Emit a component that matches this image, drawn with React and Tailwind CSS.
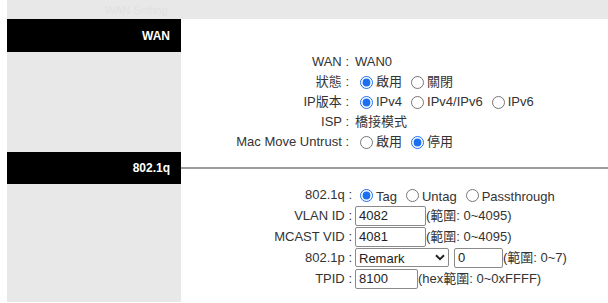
import React, { useState } from 'react';

const font = { fontFamily: '"Liberation Sans", Arial, "Noto Sans CJK TC", sans-serif' };

const Radio = ({ checked, onChange, label, name, low }) => (
  <label className="inline-flex items-center mr-[4px]">
    <input
      type="radio"
      name={name}
      checked={checked}
      onChange={onChange}
      className="w-[13px] h-[13px] ml-[5px] mr-[3px] accent-[#1b6ff0]"
    />
    <span className={low ? 'translate-y-[2px]' : ''}>{label}</span>
  </label>
);

const Row = ({ label, width, gap, children, h = 'h-[20px]' }) => (
  <div className={`flex items-center ${h}`}>
    <div className="text-right shrink-0" style={{ width }}>{label} :</div>
    <div className="flex items-center" style={{ paddingLeft: gap }}>{children}</div>
  </div>
);

const Input = ({ value, w }) => (
  <input
    defaultValue={value}
    className={`${w} h-[20px] border border-[#8a8a8a] rounded-[2px] px-[3px] text-[13px] text-[#222] bg-white`}
  />
);

export default function App() {
  const [status, setStatus] = useState('on');
  const [ipv, setIpv] = useState('4');
  const [mac, setMac] = useState('off');
  const [q, setQ] = useState('tag');

  return (
    <div className="w-[608px] h-[303px] bg-white overflow-hidden text-[13px] text-[#333]" style={font}>
      <div className="ml-[7px] h-[19px] bg-[#e8e8e8] pl-[98px] pt-[5px] text-[11px] text-[#e1e1e1] leading-none">
        WAN Setting
      </div>

      {/* WAN section */}
      <div className="flex ml-[7px]">
        <div className="w-[174px] flex flex-col bg-[#e8e8e8]">
          <div className="h-[33px] bg-black text-white font-bold text-[12px] flex items-center justify-end pr-[11px]">WAN</div>
        </div>
        <div className="flex-1 pt-[33px]">
          <Row label="WAN" width={168} gap={6}>WAN0</Row>
          <Row label="狀態" width={168} gap={6}>
            <Radio name="st" checked={status === 'on'} onChange={() => setStatus('on')} label="啟用" />
            <Radio name="st" checked={status === 'off'} onChange={() => setStatus('off')} label="關閉" />
          </Row>
          <Row label="IP版本" width={168} gap={6}>
            <Radio name="ip" checked={ipv === '4'} onChange={() => setIpv('4')} label="IPv4" />
            <Radio name="ip" checked={ipv === '46'} onChange={() => setIpv('46')} label="IPv4/IPv6" />
            <Radio name="ip" checked={ipv === '6'} onChange={() => setIpv('6')} label="IPv6" />
          </Row>
          <Row label="ISP" width={168} gap={6}>橋接模式</Row>
          <Row label="Mac Move Untrust" width={168} gap={6}>
            <Radio name="mac" checked={mac === 'on'} onChange={() => setMac('on')} label="啟用" />
            <Radio name="mac" checked={mac === 'off'} onChange={() => setMac('off')} label="停用" />
          </Row>
        </div>
      </div>

      {/* 802.1q section */}
      <div className="flex ml-[7px] h-[150px]">
        <div className="w-[174px] flex flex-col bg-[#e8e8e8]">
          <div className="h-[32px] bg-black text-white font-bold text-[12px] flex items-center justify-end pr-[11px]">802.1q</div>
        </div>
        <div className="flex-1">
          <div className="h-[32px] flex items-center">
            <div className="w-full h-[2px] bg-[#9c9c9c]" />
          </div>
          <div className="pt-[1px]">
            <Row label="802.1q" width={171} gap={3}>
              <Radio name="q" low checked={q === 'tag'} onChange={() => setQ('tag')} label="Tag" />
              <Radio name="q" low checked={q === 'untag'} onChange={() => setQ('untag')} label="Untag" />
              <Radio name="q" low checked={q === 'pass'} onChange={() => setQ('pass')} label="Passthrough" />
            </Row>
            <Row label="VLAN ID" width={171} gap={3} h="h-[21px]">
              <Input value="4082" w="w-[71px]" />
              <span>(範圍: 0~4095)</span>
            </Row>
            <Row label="MCAST VID" width={171} gap={3} h="h-[21px]">
              <Input value="4081" w="w-[71px]" />
              <span>(範圍: 0~4095)</span>
            </Row>
            <Row label="802.1p" width={171} gap={3} h="h-[21px]">
              <div className="relative w-[94px] h-[19px]">
                <select
                  defaultValue="remark"
                  className="appearance-none w-full h-full border border-[#8a8a8a] rounded-[2px] pl-[3px] text-[13px] text-[#222] bg-white"
                >
                  <option value="remark">Remark</option>
                  <option value="copy">Copy</option>
                </select>
                <svg className="absolute right-[4px] top-[6px] pointer-events-none" width="10" height="7" viewBox="0 0 10 7">
                  <path d="M1 1.2 L5 5.2 L9 1.2" fill="none" stroke="#222" strokeWidth="2" />
                </svg>
              </div>
              <div className="ml-[5px]">
                <Input value="0" w="w-[49px]" />
              </div>
              <span>(範圍: 0~7)</span>
            </Row>
            <Row label="TPID" width={171} gap={3} h="h-[21px]">
              <Input value="8100" w="w-[63px]" />
              <span>(hex範圍: 0~0xFFFF)</span>
            </Row>
          </div>
        </div>
      </div>
    </div>
  );
}
